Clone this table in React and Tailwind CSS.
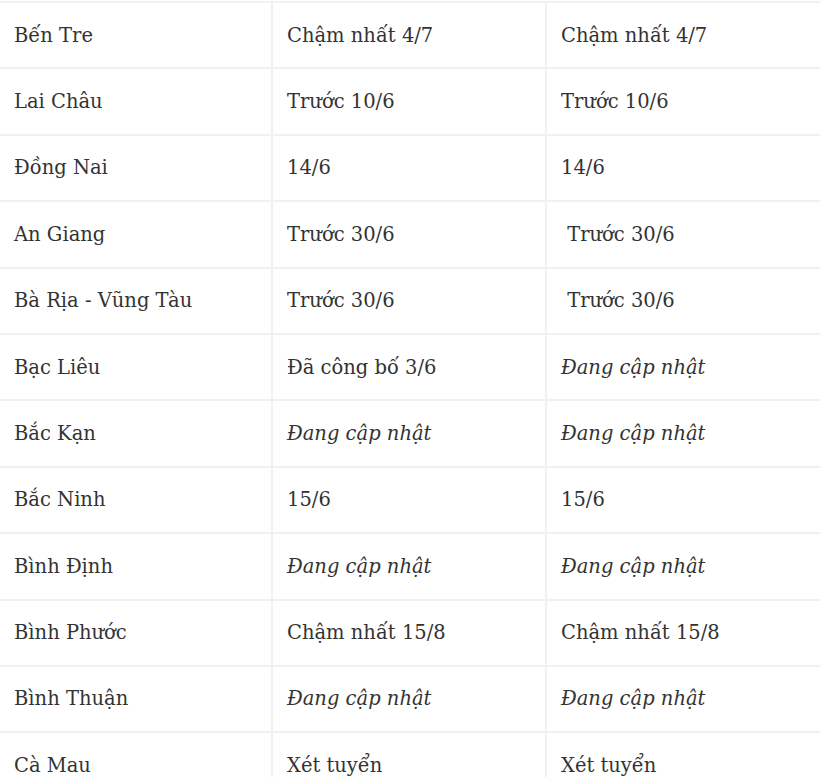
import React from "react";

const rows = [
  ["Bến Tre", "Chậm nhất 4/7", "Chậm nhất 4/7"],
  ["Lai Châu", "Trước 10/6", "Trước 10/6"],
  ["Đồng Nai", "14/6", "14/6"],
  ["An Giang", "Trước 30/6", "\u00a0Trước 30/6"],
  ["Bà Rịa - Vũng Tàu", "Trước 30/6", "\u00a0Trước 30/6"],
  ["Bạc Liêu", "Đã công bố 3/6", "*Đang cập nhật"],
  ["Bắc Kạn", "*Đang cập nhật", "*Đang cập nhật"],
  ["Bắc Ninh", "15/6", "15/6"],
  ["Bình Định", "*Đang cập nhật", "*Đang cập nhật"],
  ["Bình Phước", "Chậm nhất 15/8", "Chậm nhất 15/8"],
  ["Bình Thuận", "*Đang cập nhật", "*Đang cập nhật"],
  ["Cà Mau", "Xét tuyển", "Xét tuyển"],
];

function Cell({ text }) {
  const italic = text.startsWith("*");
  return (
    <td className={`border-2 border-[#f1f1f1] px-[14px] align-middle ${italic ? "italic" : ""}`}>
      {italic ? text.slice(1) : text}
    </td>
  );
}

export default function App() {
  return (
    <div className="h-[777px] w-[820px] overflow-hidden bg-white pt-px">
      <table
        className="-ml-[2px] w-[822px] table-fixed border-collapse text-[19.5px] text-[#333]"
        style={{ fontFamily: '"DejaVu Serif", serif' }}
      >
        <colgroup>
          <col className="w-[273px]" />
          <col className="w-[274px]" />
          <col className="w-[275px]" />
        </colgroup>
        <tbody>
          {rows.map((r) => (
            <tr key={r[0]} className="h-[66.4px]">
              {r.map((c, i) => (
                <Cell key={i} text={c} />
              ))}
            </tr>
          ))}
        </tbody>
      </table>
    </div>
  );
}
